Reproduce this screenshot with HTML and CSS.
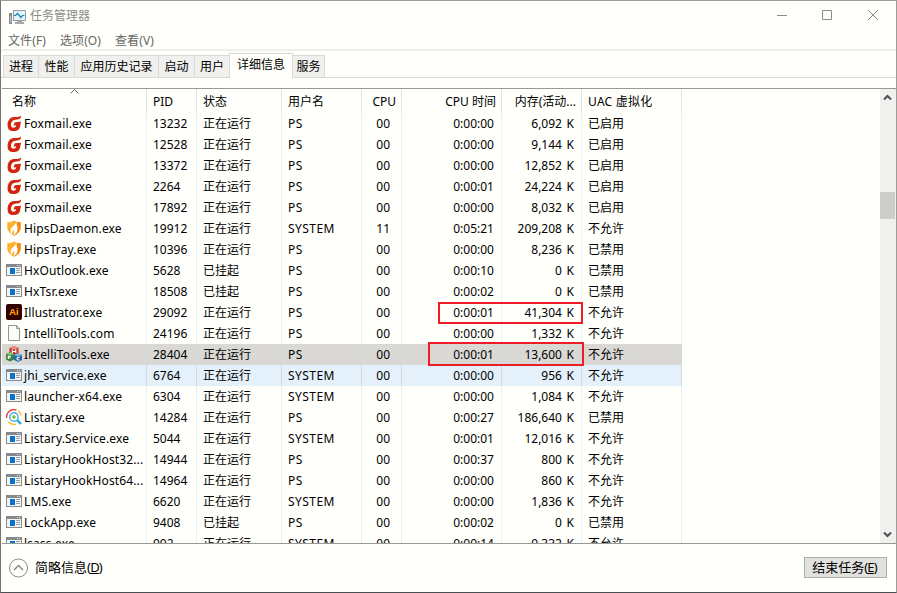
FILE: index.html
```html
<!DOCTYPE html>
<html lang="zh-CN">
<head>
<meta charset="utf-8">
<title>任务管理器</title>
<link rel="stylesheet" href="styles.css">
</head>
<body>
<svg class="defs" aria-hidden="true">
  <symbol id="fox" viewBox="0 0 16 16"><path fill="#d32512" d="M15 .3C15.2 2.6 14.4 4 12.6 4.3L9.2 4.7C6.2 5.2 5 7.1 5 9.6C5 11.8 5.9 12.8 7.3 12.8C9 12.8 10 12 10.2 10.3L7.4 10.4L8.8 7.3L15 6.8L14 11.8C13.2 15 11.3 16 7.4 16C3.6 16 1.6 14 1.6 10.4C1.6 5.6 3.8 2.4 7.8 2.1L11.3 1.9C13.2 1.8 14.4 1.4 15 .3Z"/></symbol>
  <symbol id="hips" viewBox="0 0 16 16"><path fill="#ffb12b" d="M1.3 2.2Q5 2.6 8 .6Q11 2.6 14.7 2.2V8Q14 13 8 15.7Q2 13 1.3 8Z"/><path fill="#f58a16" d="M8 15.7Q14 13 14.7 8V2.2L11 2V8Z"/><path fill="#fff" d="M10.3 2Q9.7 4.6 6.5 6.8Q2.8 9.8 5.8 14.4Q5.8 11.7 8.3 9.6L7.8 15Q12.6 12 11.4 7Q10.2 4.8 10.3 2Z"/></symbol>
  <symbol id="app" viewBox="0 0 16 16" shape-rendering="crispEdges"><path fill="#858a8e" d="M0 2H16V14H0Z"/><path fill="#f5f5f4" d="M1 5H15V13H1Z"/><path fill="#dfe3e6" d="M11 3h1v1h-1zM13 3h1v1h-1z"/><path fill="#0873cf" d="M4 6H9V12H4Z"/><path fill="#999da0" d="M10 6h4v1h-4zM10 8h4v1h-4zM10 10h4v1h-4z"/></symbol>
  <symbol id="ai" viewBox="0 0 16 16"><rect width="16" height="16" rx="2" fill="#310000"/><text x="8" y="11.3" text-anchor="middle" font-family="Open Sans" font-size="9.5" font-weight="700" fill="#ff9a00">Ai</text></symbol>
  <symbol id="doc" viewBox="0 0 16 16"><path fill="#fcfcfb" stroke="#929292" d="M2.5 .5H10.5L13.5 3.5V15.5H2.5Z"/><path fill="none" stroke="#929292" d="M10.5 .5V3.5H13.5"/></symbol>
  <symbol id="cubes" viewBox="0 0 16 16"><path fill="#c93028" d="M3.5 2L8 0L12.5 2V8L8 9.5L3.5 7.5Z"/><path fill="#ef8f82" d="M3.5 2L8 0L12.5 2L8 3.5Z"/><path fill="#39833c" d="M0 8L4 6L8 8V13.5L4 15.5L0 13.5Z"/><path fill="#83bd77" d="M0 8L4 6L8 8L4 9.5Z"/><path fill="#286bac" d="M8 9L12 7L16 9V14L12 16L8 14Z"/><path fill="#83b9df" d="M8 9L12 7L16 9L12 10.5Z"/><path fill="none" stroke="#fff" stroke-width="1.1" d="M6.4 3.5V7.3M9.8 3.3V7M6.4 5.5L9.8 5.2M2.3 9.8V13M2.3 10.3H5M2.3 11.8H4.5M13.7 11.3Q11 11 11 12.7T13.5 13.8"/></symbol>
  <symbol id="listary" viewBox="0 0 16 16"><g fill="none" stroke-width="1.4"><path stroke="#ec4039" d="M.7 9A7.3 7.3 0 0 1 10.5 1.1"/><path stroke="#f6bd27" d="M12 1.9A7.3 7.3 0 0 1 15.2 6.5M2.5 12.8A7.3 7.3 0 0 0 10 15.1"/><circle cx="8" cy="8" r="4.2" stroke="#42afe5"/><path stroke="#27a8e0" d="M11 11L15 15" stroke-width="2.4"/></g><circle cx="8" cy="8" r="1.8" fill="#79bd38"/></symbol>
</svg>
<div class="window">
  <header class="titlebar">
    <svg class="logo" width="17" height="16" viewBox="0 0 17 16"><path fill="#888" d="M0 4h3v11H0z"/><path fill="#c8c8c8" d="M1 6h1v8H1z"/><path fill="#62b54d" d="M1 5h1v2H1z"/><path fill="#e0f4fc" stroke="#999" d="M4.500 1.500h12v10h-12z"/><path fill="none" stroke="#1583b8" stroke-width="1.200" d="M5 6.500h1.500l2-2 3.500 4 1.500-2h2"/><path fill="#aaa" d="M8 12h5v1h2v2H6v-2h2z"/></svg>
    <h1 class="title">任务管理器</h1>
    <svg class="controls" width="106" height="12" viewBox="0 0 106 12" fill="none" stroke="#8c8c8a"><path d="M0 6.5H10M45.5 1.5H54.5V10.5H45.5ZM91 1L101 11M101 1L91 11"/></svg>
  </header>
  <nav class="menu"><span>文件(F)</span><span>选项(O)</span><span>查看(V)</span></nav>
  <nav class="tabs">
    <span class="tab t-proc">进程</span><span class="tab t-perf">性能</span><span class="tab t-hist">应用历史记录</span><span class="tab t-start">启动</span><span class="tab t-user">用户</span><span class="tab active">详细信息</span><span class="tab t-serv">服务</span>
  </nav>
  <main class="list">
    <div class="table">
      <div class="row head"><span class="name">名称<svg class="sort" width="9" height="5" viewBox="0 0 9 5"><path d="M.5 4.5L4.5 .5L8.5 4.5" fill="none" stroke="#666"/></svg></span><span>PID</span><span>状态</span><span>用户名</span><span class="num">CPU</span><span class="num">CPU 时间</span><span class="num">内存(活动...</span><span class="uac">UAC 虚拟化</span></div>
      <div id="rows"></div>
      <div class="mark mark-a"></div>
      <div class="mark mark-b"></div>
    </div>
    <div class="scroll">
      <svg width="9" height="7" viewBox="0 0 9 7"><path d="M1 5.5L4.5 2L8 5.500" fill="none" stroke="#505050" stroke-width="2"/></svg>
      <div class="thumb"></div>
      <svg class="down" width="9" height="7" viewBox="0 0 9 7"><path d="M1 1.5L4.5 5L8 1.5" fill="none" stroke="#505050" stroke-width="2"/></svg>
    </div>
  </main>
  <footer class="footer">
    <svg width="20" height="20" viewBox="0 0 20 20" fill="none" stroke="#8a8a88"><circle cx="10.5" cy="10" r="9"/><path d="M6 12L10.5 7.5L15 12" stroke-width="1.5"/></svg>
    <span class="brief">简略信息<span class="key">(<u>D</u>)</span></span>
    <button class="end">结束任务<span class="key">(<u>E</u>)</span></button>
  </footer>
</div>
<script src="rows.js"></script>
</body>
</html>
```
FILE: styles.css
```css
* { box-sizing: border-box; }
body { margin: 0; overflow: hidden; background: #fffffb; color: #000; font: 12px/16px "Noto Sans", "Noto Sans CJK SC", sans-serif; }
.defs { position: absolute; width: 0; height: 0; }
.window { width: 897px; height: 593px; display: flex; flex-direction: column; border: 1px solid #9c9c9a; border-left-color: #777370; border-bottom-color: #4a5052; background: #fffffb; }
.titlebar { height: 30px; display: flex; align-items: center; padding: 0 13px 0 8px; color: #8c8c8a; }
.logo { margin-top: 1px; }
.title { margin: 0 0 0 4px; font-size: 12px; font-weight: 400; }
.controls { margin: 0 0 2px auto; }
.menu { height: 20px; display: flex; gap: 14px; padding: 2px 0 0 7px; border-bottom: 2px solid #eeeeec; color: #666; letter-spacing: .1px; }
.tabs { height: 27px; display: flex; align-items: flex-end; padding-left: 2px; border-bottom: 1px solid #d9d9d7; }
.tab { width: 36px; height: 22px; border: 1px solid #d9d9d7; border-right-width: 0; border-bottom: 0; background: #f0f0ee; text-align: center; line-height: 22px; white-space: nowrap; }
.t-proc { width: 35px; }
.t-hist { width: 84px; }
.t-user { width: 35px; }
.active { width: 64px; height: 25px; margin-bottom: -1px; border-right-width: 1px; background: #fffffb; }
.t-serv { width: 32px; border-left: 0; border-right-width: 1px; }
.list { height: 456px; margin-top: 10px; margin-left: 1px; display: flex; justify-content: space-between; border-top: 1px solid #999995; border-bottom: 1px solid #999995; overflow: hidden; }
.table { position: relative; width: 680px; height: 454px; overflow: hidden; }
.row { display: grid; grid-template-columns: 145px 50px 85px 80px 40px 100px 80px 100px; height: 21px; }
.row > span { padding: 0 6px; border-right: 1px solid #e8f0f8; line-height: 21px; white-space: nowrap; overflow: hidden; }
.row > .num { padding-right: 7px; text-align: right; }
.row > .cpu { padding-right: 11px; }
.row > .mem { word-spacing: 1.5px; }
.row > .user { letter-spacing: .45px; }
.row > .name { display: flex; align-items: center; gap: 2px; padding: 0 0 0 4px; letter-spacing: .13px; }
.row.head { height: 24px; }
.head > span { border-right-color: #e3e3e1; line-height: 25px; }
.row.head > .num { padding-right: 5px; }
.row.head > .name { position: relative; padding-left: 10px; letter-spacing: 0; }
.row.head > .uac { letter-spacing: .25px; }
.sort { position: absolute; left: 68px; top: 0; }
.icon { width: 16px; height: 16px; flex: none; margin-bottom: 2px; }
.selected { background: #d9d8d5; }
.hover { background: #e5f1fa; }
.selected > span, .hover > span { border-right-color: #d0d8e0; }
.mark { position: absolute; border: 2px solid #ee1c24; }
.mark-a { left: 436px; top: 213px; width: 145px; height: 22px; }
.mark-b { left: 426px; top: 253px; width: 156px; height: 24px; }
.scroll { width: 16px; display: flex; flex-direction: column; background: #f0f0ee; padding: 5px 0 5px; }
.scroll svg { margin-left: 3px; }
.thumb { width: 15px; height: 27px; margin-top: 91px; background: #cdcdca; }
.down { margin-top: auto; }
.footer { flex: 1; display: flex; align-items: center; padding: 0 9px 0 7px; }
.brief { margin: 0 0 2px 7px; font-size: 13px; }
.key { letter-spacing: -.8px; }
.end { margin-left: auto; margin-bottom: 2px; width: 83px; height: 21px; padding: 0 2px 0 0; border: 1px solid #adada9; background: #e1e1de; font: 13px/18px "Noto Sans", "Noto Sans CJK SC", sans-serif; color: #000; white-space: nowrap; }
```
FILE: rows.js
```js
const rows = [
  ["fox", "Foxmail.exe", "13232", "正在运行", "PS", "00", "0:00:00", "6,092", "已启用"],
  ["fox", "Foxmail.exe", "12528", "正在运行", "PS", "00", "0:00:00", "9,144", "已启用"],
  ["fox", "Foxmail.exe", "13372", "正在运行", "PS", "00", "0:00:00", "12,852", "已启用"],
  ["fox", "Foxmail.exe", "2264", "正在运行", "PS", "00", "0:00:01", "24,224", "已启用"],
  ["fox", "Foxmail.exe", "17892", "正在运行", "PS", "00", "0:00:00", "8,032", "已启用"],
  ["hips", "HipsDaemon.exe", "19912", "正在运行", "SYSTEM", "11", "0:05:21", "209,208", "不允许"],
  ["hips", "HipsTray.exe", "10396", "正在运行", "PS", "00", "0:00:00", "8,236", "已禁用"],
  ["app", "HxOutlook.exe", "5628", "已挂起", "PS", "00", "0:00:10", "0", "已禁用"],
  ["app", "HxTsr.exe", "18508", "已挂起", "PS", "00", "0:00:02", "0", "已禁用"],
  ["ai", "Illustrator.exe", "29092", "正在运行", "PS", "00", "0:00:01", "41,304", "不允许"],
  ["doc", "IntelliTools.com", "24196", "正在运行", "PS", "00", "0:00:00", "1,332", "不允许"],
  ["cubes", "IntelliTools.exe", "28404", "正在运行", "PS", "00", "0:00:01", "13,600", "不允许", "selected"],
  ["app", "jhi_service.exe", "6764", "正在运行", "SYSTEM", "00", "0:00:00", "956", "不允许", "hover"],
  ["app", "launcher-x64.exe", "6304", "正在运行", "SYSTEM", "00", "0:00:00", "1,084", "不允许"],
  ["listary", "Listary.exe", "14284", "正在运行", "PS", "00", "0:00:27", "186,640", "已禁用"],
  ["app", "Listary.Service.exe", "5044", "正在运行", "SYSTEM", "00", "0:00:01", "12,016", "不允许"],
  ["app", "ListaryHookHost32...", "14944", "正在运行", "PS", "00", "0:00:37", "800", "不允许"],
  ["app", "ListaryHookHost64...", "14964", "正在运行", "PS", "00", "0:00:00", "860", "不允许"],
  ["app", "LMS.exe", "6620", "正在运行", "SYSTEM", "00", "0:00:00", "1,836", "不允许"],
  ["app", "LockApp.exe", "9408", "已挂起", "PS", "00", "0:00:02", "0", "已禁用"],
  ["app", "lsass.exe", "992", "正在运行", "SYSTEM", "00", "0:00:14", "9,332", "不允许"]
];

document.getElementById("rows").innerHTML = rows.map(
  ([icon, name, pid, state, user, cpu, time, mem, uac, mode = ""]) =>
    `<div class="row ${mode}"><span class="name"><svg class="icon"><use href="#${icon}"/></svg>${name}</span>` +
    `<span>${pid}</span><span>${state}</span><span class="user">${user}</span><span class="num cpu">${cpu}</span>` +
    `<span class="num">${time}</span><span class="num mem">${mem} K</span><span>${uac}</span></div>`
).join("");
```
